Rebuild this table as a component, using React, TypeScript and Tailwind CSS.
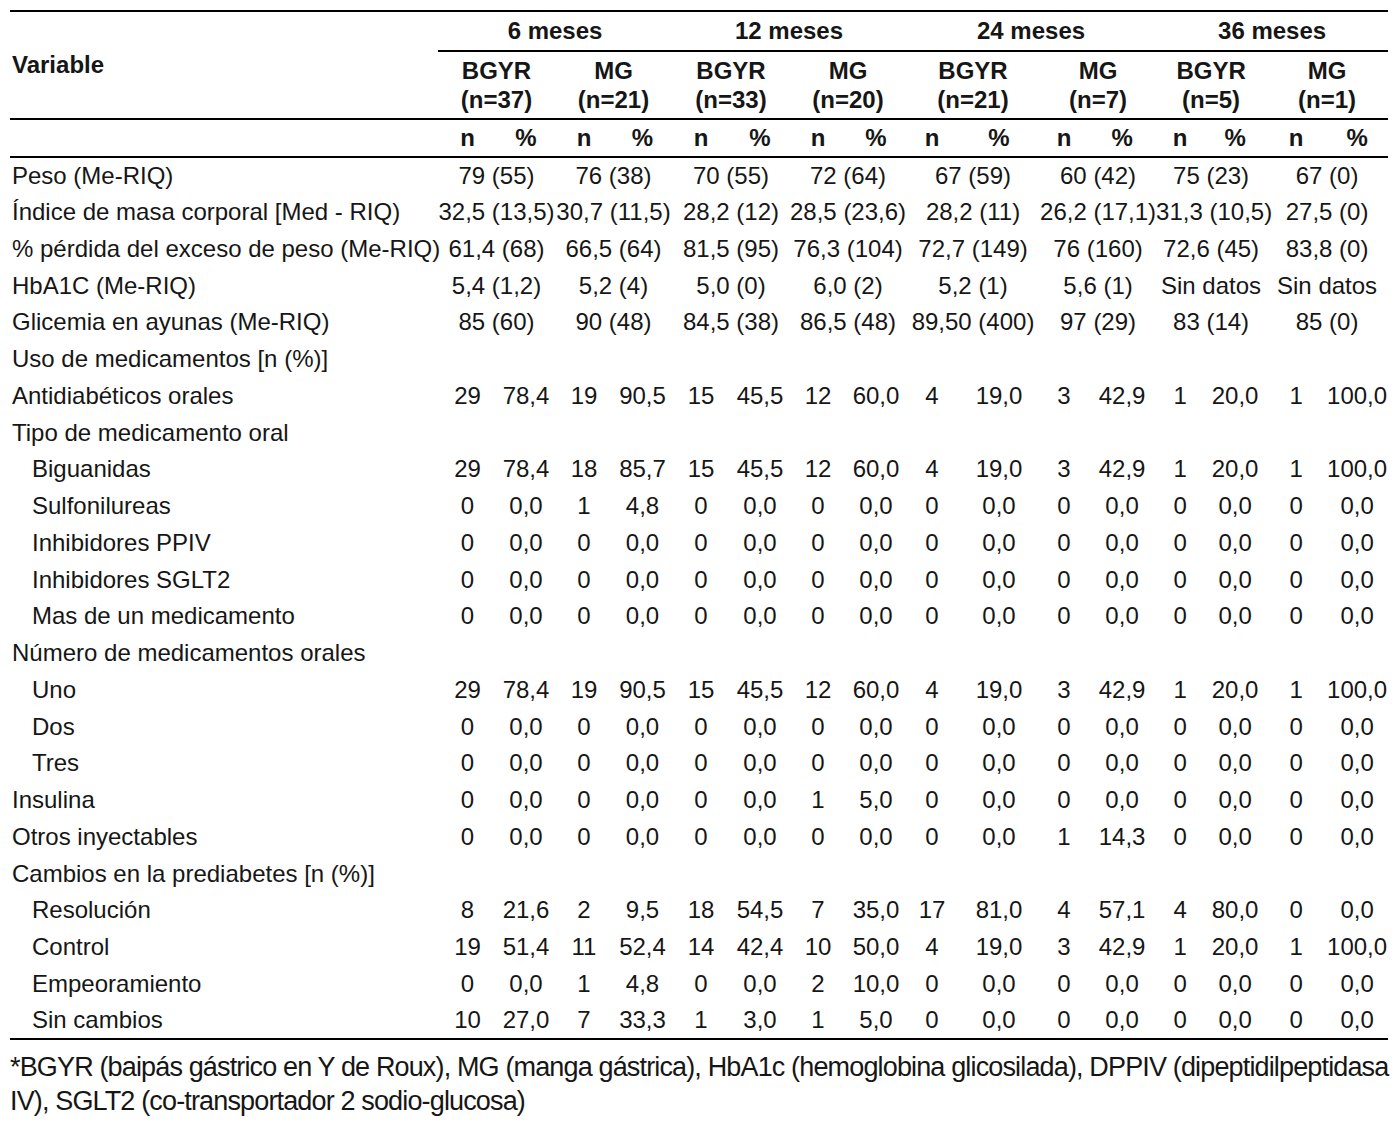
const colWidths = [428, 59, 58, 58, 59, 58, 60, 56, 60, 52, 82, 48, 68, 48, 62, 60, 62];

const groups = ["6 meses", "12 meses", "24 meses", "36 meses"];
const subs = [
  ["BGYR", "(n=37)"], ["MG", "(n=21)"],
  ["BGYR", "(n=33)"], ["MG", "(n=20)"],
  ["BGYR", "(n=21)"], ["MG", "(n=7)"],
  ["BGYR", "(n=5)"], ["MG", "(n=1)"],
];

type Row =
  | { kind: "merged"; label: string; values: string[] }
  | { kind: "section"; label: string }
  | { kind: "counts"; label: string; indent?: boolean; values: string[] };

const zeros = "0 0,0 0 0,0 0 0,0 0 0,0 0 0,0 0 0,0 0 0,0 0 0,0".split(" ");
const split = (s: string) => s.split(" ");

const rows: Row[] = [
  { kind: "merged", label: "Peso (Me-RIQ)", values: ["79 (55)", "76 (38)", "70 (55)", "72 (64)", "67 (59)", "60 (42)", "75 (23)", "67 (0)"] },
  { kind: "merged", label: "Índice de masa corporal [Med - RIQ)", values: ["32,5 (13,5)", "30,7 (11,5)", "28,2 (12)", "28,5 (23,6)", "28,2 (11)", "26,2 (17,1)", "31,3 (10,5)", "27,5 (0)"] },
  { kind: "merged", label: "% pérdida del exceso de peso (Me-RIQ)", values: ["61,4 (68)", "66,5 (64)", "81,5 (95)", "76,3 (104)", "72,7 (149)", "76 (160)", "72,6 (45)", "83,8 (0)"] },
  { kind: "merged", label: "HbA1C (Me-RIQ)", values: ["5,4 (1,2)", "5,2 (4)", "5,0 (0)", "6,0 (2)", "5,2 (1)", "5,6 (1)", "Sin datos", "Sin datos"] },
  { kind: "merged", label: "Glicemia en ayunas (Me-RIQ)", values: ["85 (60)", "90 (48)", "84,5 (38)", "86,5 (48)", "89,50 (400)", "97 (29)", "83 (14)", "85 (0)"] },
  { kind: "section", label: "Uso de medicamentos [n (%)]" },
  { kind: "counts", label: "Antidiabéticos orales", values: split("29 78,4 19 90,5 15 45,5 12 60,0 4 19,0 3 42,9 1 20,0 1 100,0") },
  { kind: "section", label: "Tipo de medicamento oral" },
  { kind: "counts", label: "Biguanidas", indent: true, values: split("29 78,4 18 85,7 15 45,5 12 60,0 4 19,0 3 42,9 1 20,0 1 100,0") },
  { kind: "counts", label: "Sulfonilureas", indent: true, values: split("0 0,0 1 4,8 0 0,0 0 0,0 0 0,0 0 0,0 0 0,0 0 0,0") },
  { kind: "counts", label: "Inhibidores PPIV", indent: true, values: zeros },
  { kind: "counts", label: "Inhibidores SGLT2", indent: true, values: zeros },
  { kind: "counts", label: "Mas de un medicamento", indent: true, values: zeros },
  { kind: "section", label: "Número de medicamentos orales" },
  { kind: "counts", label: "Uno", indent: true, values: split("29 78,4 19 90,5 15 45,5 12 60,0 4 19,0 3 42,9 1 20,0 1 100,0") },
  { kind: "counts", label: "Dos", indent: true, values: zeros },
  { kind: "counts", label: "Tres", indent: true, values: zeros },
  { kind: "counts", label: "Insulina", values: split("0 0,0 0 0,0 0 0,0 1 5,0 0 0,0 0 0,0 0 0,0 0 0,0") },
  { kind: "counts", label: "Otros inyectables", values: split("0 0,0 0 0,0 0 0,0 0 0,0 0 0,0 1 14,3 0 0,0 0 0,0") },
  { kind: "section", label: "Cambios en la prediabetes [n (%)]" },
  { kind: "counts", label: "Resolución", indent: true, values: split("8 21,6 2 9,5 18 54,5 7 35,0 17 81,0 4 57,1 4 80,0 0 0,0") },
  { kind: "counts", label: "Control", indent: true, values: split("19 51,4 11 52,4 14 42,4 10 50,0 4 19,0 3 42,9 1 20,0 1 100,0") },
  { kind: "counts", label: "Empeoramiento", indent: true, values: split("0 0,0 1 4,8 0 0,0 2 10,0 0 0,0 0 0,0 0 0,0 0 0,0") },
  { kind: "counts", label: "Sin cambios", indent: true, values: split("10 27,0 7 33,3 1 3,0 1 5,0 0 0,0 0 0,0 0 0,0 0 0,0") },
];

export default function App() {
  return (
    <div className="min-h-[1142px] bg-white px-[10px] pt-[10px] text-[#161616] font-['Liberation_Sans',Arial,sans-serif] text-[24px]">
      <table className="table-fixed border-collapse w-[1378px]">
        <colgroup>
          {colWidths.map((w, i) => (
            <col key={i} style={{ width: w }} />
          ))}
        </colgroup>
        <thead>
          <tr className="h-[40px] border-t-2 border-black">
            <th rowSpan={2} className="text-left align-middle font-bold p-0 pl-[2px] leading-none border-b-2 border-black">
              Variable
            </th>
            {groups.map((g) => (
              <th key={g} colSpan={4} className="font-bold p-0 text-center leading-none border-b-2 border-black">
                {g}
              </th>
            ))}
          </tr>
          <tr className="h-[68px]">
            {subs.map(([a, b], i) => (
              <th key={i} colSpan={2} className="font-bold p-0 text-center leading-[29px] border-b-2 border-black">
                {a}
                <br />
                {b}
              </th>
            ))}
          </tr>
          <tr className="h-[38px] border-b-2 border-black">
            <th className="p-0" />
            {subs.map((_, i) => [
              <th key={i + "n"} className="font-bold p-0 text-center leading-none">n</th>,
              <th key={i + "p"} className="font-bold p-0 text-center leading-none">%</th>,
            ])}
          </tr>
        </thead>
        <tbody className="border-b-2 border-black">
          {rows.map((r, ri) => (
            <tr key={ri} className="h-[36.75px]">
              <td className={`p-0 leading-none whitespace-nowrap ${r.kind === "counts" && r.indent ? "pl-[22px]" : "pl-[2px]"}`}>
                {r.label}
              </td>
              {r.kind === "section" && <td colSpan={16} className="p-0" />}
              {r.kind === "merged" &&
                r.values.map((v, i) => (
                  <td key={i} colSpan={2} className="p-0 text-center leading-none whitespace-nowrap">
                    {v}
                  </td>
                ))}
              {r.kind === "counts" &&
                r.values.map((v, i) => (
                  <td key={i} className="p-0 text-center leading-none whitespace-nowrap">
                    {v}
                  </td>
                ))}
            </tr>
          ))}
        </tbody>
      </table>
      <p className="mt-[10px] leading-[34px] whitespace-nowrap text-[27px] tracking-[-0.85px]">
        *BGYR (baipás gástrico en Y de Roux), MG (manga gástrica), HbA1c (hemoglobina glicosilada), DPPIV (dipeptidilpeptidasa
        <br />
        IV), SGLT2 (co-transportador 2 sodio-glucosa)
      </p>
    </div>
  );
}
